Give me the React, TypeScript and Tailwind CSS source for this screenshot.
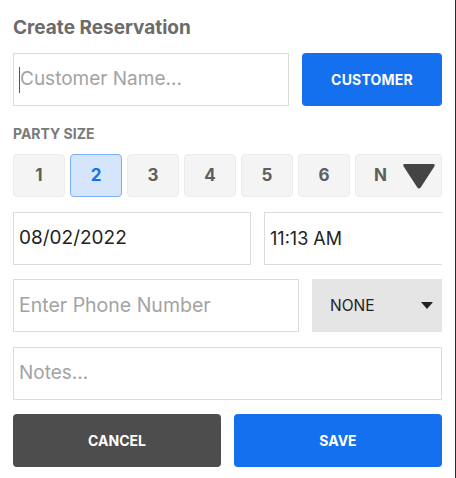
import React from "react";

const sizes = ["1", "2", "3", "4", "5", "6"];

export default function App() {
  return (
    <div className="h-[478px] w-[456px] border-r border-[#2a2a2a] bg-white font-['Inter',sans-serif]">
      <div className="flex w-[442px] flex-col pl-[13px] pt-[16px]">
        <h1 className="text-[19px] font-bold leading-[24px] text-[#6b6b6b]">Create Reservation</h1>

        <div className="mt-[13px] flex h-[53px] gap-[13px]">
          <div className="flex w-[276px] items-center border border-[#dcdcdc] pl-[5px]">
            <span className="h-[26px] w-px bg-[#555]" />
            <span className="text-[19px] text-[#a3a3a3]">Customer Name...</span>
          </div>
          <button className="flex-1 rounded-[4px] bg-[#1570ef] text-[14px] font-bold tracking-[0.2px] text-white">
            CUSTOMER
          </button>
        </div>

        <p className="mt-[20px] text-[14px] font-bold leading-[16px] text-[#7a7a7a]">PARTY SIZE</p>

        <div className="mt-[12px] flex h-[43px] gap-[5px]">
          {sizes.map((s) => (
            <div
              key={s}
              className={
                s === "2"
                  ? "flex w-[52px] items-center justify-center rounded-[4px] border border-[#7fb0f5] bg-[#d4e5fc] text-[17px] font-bold text-[#1570ef]"
                  : "flex w-[52px] items-center justify-center rounded-[4px] border border-[#ececec] bg-[#f4f4f4] text-[17px] font-bold text-[#5e5e5e]"
              }
            >
              {s}
            </div>
          ))}
          <div className="flex flex-1 items-center rounded-[4px] border border-[#ececec] bg-[#f4f4f4] pl-[18px] pr-[5px]">
            <span className="text-[17px] font-bold text-[#5e5e5e]">N</span>
            <svg className="ml-auto" width="34" height="26" viewBox="0 0 34 26">
              <path d="M3 1 H31 Q34 1 32 4 L19 24 Q17 27 15 24 L2 4 Q0 1 3 1 Z" fill="#444" />
            </svg>
          </div>
        </div>

        <div className="mt-[15px] flex h-[53px] gap-[13px]">
          <div className="flex w-[238px] items-center border border-[#dcdcdc] pl-[5px] text-[19px] text-[#222]">
            08/02/2022
          </div>
          <div className="flex flex-1 items-center border-y border-l border-[#dcdcdc] pl-[5px] text-[18px] text-[#222]">
            11:13 AM
          </div>
        </div>

        <div className="mt-[14px] flex h-[53px] gap-[13px]">
          <div className="flex w-[286px] items-center border border-[#dcdcdc] pl-[5px] text-[19.5px] text-[#a3a3a3]">
            Enter Phone Number
          </div>
          <div className="flex flex-1 items-center bg-[#e5e5e5] pl-[18px] pr-[9px]">
            <span className="text-[15.5px] text-[#222]">NONE</span>
            <svg className="ml-auto" width="12" height="7" viewBox="0 0 12 7">
              <path d="M0 0 H12 L6 7 Z" fill="#222" />
            </svg>
          </div>
        </div>

        <div className="mt-[15px] flex h-[53px] items-center border border-[#dcdcdc] pl-[5px] text-[19px] text-[#a3a3a3]">
          Notes...
        </div>

        <div className="mt-[14px] flex h-[53px] gap-[13px]">
          <button className="w-[208px] rounded-[4px] bg-[#4d4d4d] text-[14px] font-bold text-white">CANCEL</button>
          <button className="flex-1 rounded-[4px] bg-[#1570ef] text-[14px] font-bold text-white">SAVE</button>
        </div>
      </div>
    </div>
  );
}
